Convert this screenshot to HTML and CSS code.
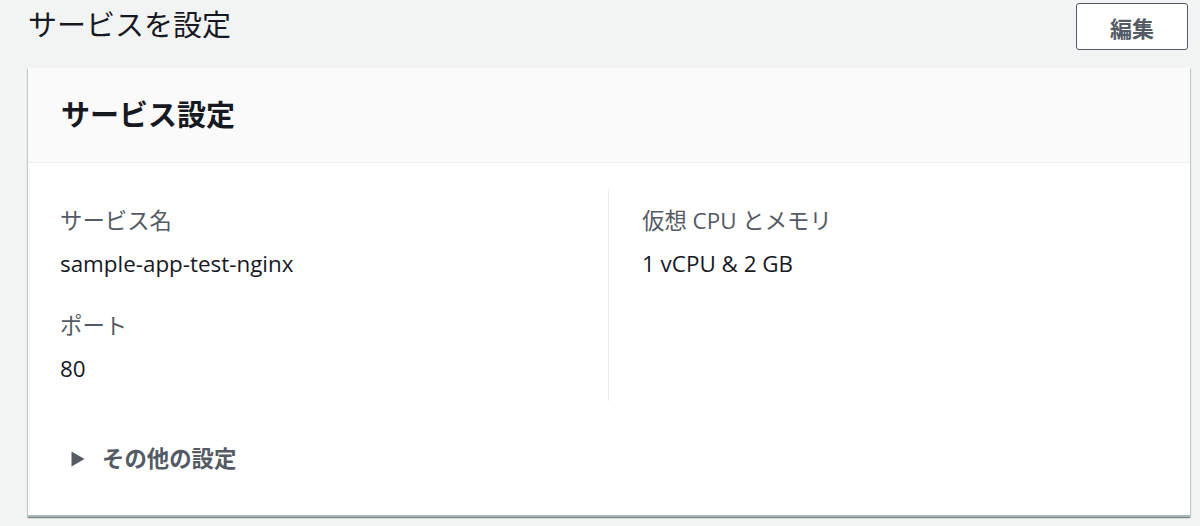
FILE: index.html
```html
<!DOCTYPE html>
<html lang="ja">
<head>
<meta charset="utf-8">
<link rel="stylesheet" href="styles.css">
</head>
<body>
<div class="page">
  <div class="topbar">
    <h1 class="page-title">サービスを設定</h1>
    <button class="btn-edit">編集</button>
  </div>
  <div class="card">
    <div class="card-header">
      <h2 class="card-title">サービス設定</h2>
    </div>
    <div class="card-body">
      <div class="cols">
        <div class="col col-left">
          <div class="field">
            <div class="label">サービス名</div>
            <div class="value">sample-app-test-nginx</div>
          </div>
          <div class="field">
            <div class="label">ポート</div>
            <div class="value">80</div>
          </div>
        </div>
        <div class="col col-right">
          <div class="field">
            <div class="label">仮想 CPU とメモリ</div>
            <div class="value">1 vCPU &amp; 2 GB</div>
          </div>
        </div>
      </div>
      <div class="expander">
        <svg class="caret" width="14" height="16" viewBox="0 0 14 16"><path d="M0.5 0.5 L13.5 8 L0.5 15.5 Z" fill="#545b64"/></svg>
        <span class="expander-label">その他の設定</span>
      </div>
    </div>
  </div>
</div>
</body>
</html>
```
FILE: styles.css
```css
* { box-sizing: border-box; }
html, body { margin: 0; padding: 0; }
body {
  background: #f2f3f3;
  font-family: "Open Sans", "Noto Sans CJK JP", sans-serif;
  color: #16191f;
  width: 1200px;
  height: 526px;
  overflow: hidden;
}
.page { padding: 0 10px 0 28px; }
.topbar {
  display: flex;
  justify-content: space-between;
  align-items: flex-start;
  height: 68px;
}
.page-title {
  margin: 5px 0 0 0;
  font-size: 29px;
  font-weight: 400;
  line-height: 40px;
  color: #16191f;
}
.btn-edit {
  margin-top: 3px;
  margin-right: 2px;
  width: 112px;
  height: 47px;
  background: #fff;
  border: 1px solid #545b64;
  border-radius: 3px;
  font-family: "Open Sans", "Noto Sans CJK JP", sans-serif;
  font-size: 22px;
  font-weight: 700;
  color: #545b64;
  padding: 0;
}
.card {
  background: #fff;
  box-shadow: 0 1px 1px 0 rgba(0,28,36,.3), 1px 1px 1px 0 rgba(0,28,36,.15), -1px 1px 1px 0 rgba(0,28,36,.15);
  border-bottom: 2px solid #aab7b8;
  height: 449px;
}
.card-header {
  background: #fafafa;
  border-bottom: 1px solid #eaeded;
  height: 95px;
  padding: 0 32px 0 33px;
  display: flex;
  align-items: center;
}
.card-title {
  margin: 0;
  font-size: 29px;
  font-weight: 700;
  line-height: 40px;
  color: #16191f;
}
.card-body { padding: 26px 32px 0 32px; }
.cols { display: grid; grid-template-columns: 1fr 1fr; }
.col-left { border-right: 1px solid #eaeded; padding: 16px 0 16px 0; }
.col-right { padding: 16px 0 16px 33px; }
.field + .field { margin-top: 30px; }
.label {
  font-size: 22.4px;
  line-height: 32px;
  color: #545b64;
}
.value {
  font-size: 22.4px;
  line-height: 32px;
  color: #16191f;
  margin-top: 11px;
}
.expander {
  margin-top: 42px;
  display: flex;
  align-items: center;
  padding-left: 11px;
  gap: 17px;
  height: 32px;
}
.expander-label {
  font-size: 22.4px;
  font-weight: 700;
  color: #545b64;
  line-height: 32px;
}
```
